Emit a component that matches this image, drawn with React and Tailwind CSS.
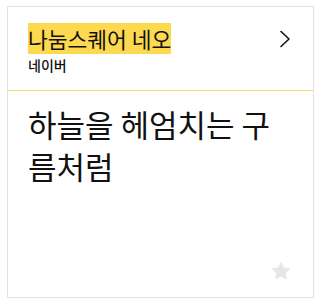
import React from "react";

const ChevronRight = () => (
  <svg width="12" height="18" viewBox="0 0 12 18" fill="none" stroke="#111" strokeWidth="1.6" strokeLinecap="round" strokeLinejoin="round">
    <path d="M2 1.5 L10 9 L2 16.5" />
  </svg>
);

const Star = () => (
  <svg width="24" height="24" viewBox="0 0 24 24" fill="#e5e7eb">
    <path d="M12 2.2l2.95 6.3 6.85.8-5.08 4.7 1.36 6.8L12 17.4l-6.08 3.4 1.36-6.8L2.2 9.3l6.85-.8z" />
  </svg>
);

export default function App() {
  return (
    <div className="bg-white w-[323px] h-[305px] pt-[6px] pl-[7px]" style={{ fontFamily: '"Noto Sans CJK KR", "Noto Sans", sans-serif' }}>
      <div className="w-[307px] h-[292px] border border-[#e2e2e2] flex flex-col">
        <div className="flex items-start justify-between pl-[20px] pr-[22px] pt-[16px] h-[84px] border-b border-[#f7d872]">
          <div className="flex flex-col">
            <span className="self-start bg-[#fdd94f] text-[21.5px] leading-[31px] text-[#111]">나눔스퀘어 네오</span>
            <span className="text-[14px] leading-[16px] font-medium text-[#111] mt-[3px]">네이버</span>
          </div>
          <div className="mt-[7px]">
            <ChevronRight />
          </div>
        </div>
        <div className="flex-1 flex flex-col px-[20px] pt-[12px] pb-[14px]">
          <p className="text-[31px] leading-[42px] text-[#111]">하늘을 헤엄치는 구름처럼</p>
          <div className="mt-auto self-end mr-[0px]">
            <Star />
          </div>
        </div>
      </div>
    </div>
  );
}
